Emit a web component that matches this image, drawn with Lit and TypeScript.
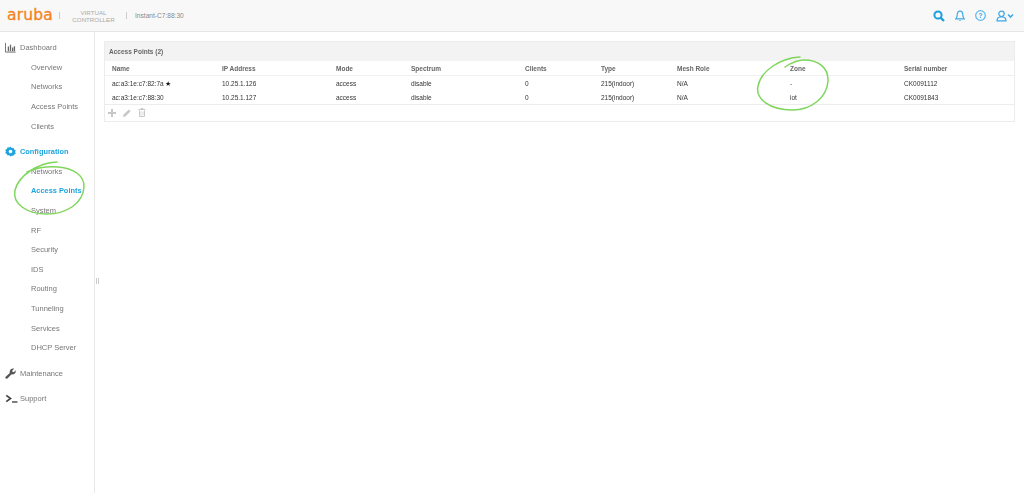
import { LitElement, html, css, svg } from "lit";
import { customElement } from "lit/decorators.js";

const cols = ["Name", "IP Address", "Mode", "Spectrum", "Clients", "Type", "Mesh Role", "Zone", "Serial number"];
const rows = [
  ["ac:a3:1e:c7:82:7a", "10.25.1.126", "access", "disable", "0", "215(indoor)", "N/A", "-", "CK0091112"],
  ["ac:a3:1e:c7:88:30", "10.25.1.127", "access", "disable", "0", "215(indoor)", "N/A", "iot", "CK0091843"],
];

@customElement("app-root")
export class AppRoot extends LitElement {
  static styles = css`
    :host { display: block; width: 1024px; height: 493px; position: relative; overflow: hidden; background: #fff;
      font-family: "Liberation Sans", Arial, sans-serif; font-size: 8px; color: #555; }
    .soft { height: 100%; display: flex; flex-direction: column; filter: blur(0.35px); }
    .top { height: 32px; box-sizing: border-box; flex: none; display: flex; align-items: center; background: #f8f8f8; border-bottom: 1px solid #e6e6e6; padding: 0 10px 0 7px; }
    .logo { font-family: "DejaVu Sans", sans-serif; font-size: 15.5px; line-height: 20px; color: #f58220; width: 47px; flex: none; margin-top: -2px; letter-spacing: 0.2px; -webkit-text-stroke: 0.3px #f58220; }
    .sep { width: 1px; height: 7px; background: #ccc; flex: none; margin-left: 5px; }
    .vc { margin-left: 11px; width: 45px; flex: none; text-align: center; font-size: 6.2px; line-height: 7px; color: #aaa; }
    .sep2 { margin-left: 10px; }
    .inst { margin-left: 8px; font-size: 6.6px; color: #8a8a8a; }
    .icons { margin-left: auto; display: flex; align-items: center; gap: 10px; }
    .icons svg { display: block; }
    .main { flex: 1; display: flex; min-height: 0; }
    .side { width: 95px; box-sizing: border-box; flex: none; border-right: 1px solid #e8e8e8; padding-top: 6px; position: relative; }
    .grip { position: absolute; left: 96px; top: 246px; width: 1px; height: 6px; border-left: 1px solid #ccc; border-right: 1px solid #ccc; }
    .group { height: 19.6px; display: flex; align-items: center; gap: 4px; padding-left: 5px; color: #777; font-size: 7.5px; }
    .group .ic { width: 11px; height: 11px; flex: none; display: block; }
    .group .sup { width: 13px; margin-right: -2px; }
    .group.on { color: #1ea5e0; font-weight: 700; font-size: 7.4px; }
    .item { height: 19.6px; display: flex; align-items: center; padding-left: 31px; color: #777; font-size: 7.5px; white-space: nowrap; }
    .item.on { color: #1ea5e0; font-weight: 700; font-size: 7.4px; }
    .gap1 { margin-top: 6px; }
    .gap2 { margin-top: 6px; }
    .content { flex: 1; padding: 9px 9px 0 9px; }
    .panel { border: 1px solid #ececec; height: 81px; box-sizing: border-box; }
    .ph { height: 19px; background: #f3f3f3; display: flex; align-items: center; padding-left: 4px; font-size: 6.5px; font-weight: 700; color: #666; }
    .grid { display: grid; grid-template-columns: 110px 114px 75px 114px 76px 76px 113px 114px 1fr; padding-left: 7px; }
    .hrow { height: 15px; box-sizing: border-box; align-items: center; border-bottom: 1px solid #f0f0f0; font-weight: 700; color: #666; font-size: 6.5px; }
    .drow { height: 14px; align-items: center; color: #333; font-size: 6.5px; }
    .star { font-size: 7px; color: #111; line-height: 6px; margin-left: 1px; }
    .tools { border-top: 1px solid #ececec; height: 15px; display: flex; align-items: center; gap: 7px; padding-left: 3px; }
    .tools svg { display: block; }
    .marks { position: absolute; left: 0; top: 0; width: 1024px; height: 493px; pointer-events: none; }
  `;

  private gear() {
    return html`<svg class="ic" viewBox="0 0 24 24"><path fill="#1ea5e0" fill-rule="evenodd" d="M12 1l2.500 3.200 4-.6 1.400 3.900 3.600 1.800-1.500 3.700 1.500 3.700-3.600 1.800-1.400 2.900-4-.4L12 23l-2.500-2.900-4 .4-1.400-2.900L.5 15.800 2 12.100.5 8.300l3.600-1.800 1.400-3.900 4 .6zM12 8a4 4 0 100 8 4 4 0 000-8z"/></svg>`;
  }

  render() {
    return html`
      <div class="soft">
        <div class="top">
          <div class="logo">aruba</div>
          <div class="sep"></div>
          <div class="vc">VIRTUAL<br />CONTROLLER</div>
          <div class="sep sep2"></div>
          <div class="inst">Instant-C7:88:30</div>
          <div class="icons">
            <svg width="12" height="12" viewBox="0 0 12 12"><circle cx="5" cy="5" r="3.600" fill="none" stroke="#1e9fdc" stroke-width="2"/><path d="M7.600 7.600L11 11" stroke="#1e9fdc" stroke-width="2.400"/></svg>
            <svg width="10" height="12" viewBox="0 0 10 12"><path d="M5 1.200C3 1.200 2.200 3 2.200 5c0 2-.7 3-1.400 3.800h8.400C8.500 8 7.800 7 7.800 5c0-2-.8-3.800-2.800-3.800z" fill="none" stroke="#3fa9e6" stroke-width="1.200"/><path d="M3.800 10.200a1.300 1.300 0 002.400 0z" fill="#3fa9e6"/></svg>
            <svg width="11" height="11" viewBox="0 0 11 11"><circle cx="5.500" cy="5.500" r="4.800" fill="none" stroke="#5bb6ea" stroke-width="1.200"/><text x="5.500" y="8" font-size="7" font-weight="700" text-anchor="middle" fill="#3fa9e6" font-family="Liberation Sans">?</text></svg>
            <svg width="18" height="12" viewBox="0 0 18 12"><circle cx="5.500" cy="3.800" r="2.700" fill="none" stroke="#3fa9e6" stroke-width="1.200"/><path d="M1 10.800c0-2.400 1.500-3.600 2.800-3.800h3.400c1.300.2 2.800 1.400 2.800 3.800z" fill="none" stroke="#3fa9e6" stroke-width="1.200"/><path d="M12 4.500l2.500 2.500L17 4.500" fill="none" stroke="#3fa9e6" stroke-width="1.600"/></svg>
          </div>
        </div>
        <div class="main">
          <div class="side">
            <div class="group">
              <svg class="ic" viewBox="0 0 12 12"><path d="M.5 1v10h11" fill="none" stroke="#666" stroke-width="1"/><path d="M3 5h1.400v5H3zM5.300 3h1.400v7H5.300zM7.600 6h1.400v4H7.600zM9.600 4.500h1.400V10H9.600z" fill="#666"/></svg>
              <span>Dashboard</span>
            </div>
            <div class="item">Overview</div>
            <div class="item">Networks</div>
            <div class="item">Access Points</div>
            <div class="item">Clients</div>
            <div class="group on gap1">${this.gear()}<span>Configuration</span></div>
            <div class="item">Networks</div>
            <div class="item on">Access Points</div>
            <div class="item">System</div>
            <div class="item">RF</div>
            <div class="item">Security</div>
            <div class="item">IDS</div>
            <div class="item">Routing</div>
            <div class="item">Tunneling</div>
            <div class="item">Services</div>
            <div class="item">DHCP Server</div>
            <div class="group gap2">
              <svg class="ic" viewBox="0 0 12 12"><path d="M.8 11.500L.2 10l5-4.600C4.700 3 6 .5 9 .5l1 .2L7.800 3l.4 1.200 1.300.4L11.700 2.500c.4 3-1.800 5-4.500 4.400l-4.800 4.800z" fill="#555"/></svg>
              <span>Maintenance</span>
            </div>
            <div class="group gap2">
              <svg class="ic sup" viewBox="0 0 13 12"><path d="M.8 2.500L5.500 6 .8 9.500" fill="none" stroke="#444" stroke-width="1.800"/><path d="M7 9.800h6" stroke="#444" stroke-width="1.500"/></svg>
              <span>Support</span>
            </div>
            <div class="grip"></div>
          </div>
          <div class="content">
            <div class="panel">
              <div class="ph">Access Points (2)</div>
              <div class="grid hrow">${cols.map((c) => html`<div>${c}</div>`)}</div>
              ${rows.map(
                (r, i) => html`<div class="grid drow">
                  ${r.map((c, j) => html`<div>${c}${i === 0 && j === 0 ? html`<span class="star">★</span>` : ""}</div>`)}
                </div>`
              )}
              <div class="tools">
                <svg width="8" height="8" viewBox="0 0 8 8"><path d="M3 0h2v3h3v2H5v3H3V5H0V3h3z" fill="#c8c8c8"/></svg>
                <svg width="8" height="8" viewBox="0 0 8 8"><path d="M0 8l.6-2.400L5.800.4l1.800 1.800L2.400 7.400z" fill="#c8c8c8"/></svg>
                <svg width="8" height="9" viewBox="0 0 8 9"><path d="M.5 1.500h7M3 1.500V.5h2v1M1.500 2.500v6h5v-6" fill="none" stroke="#c8c8c8" stroke-width="1"/><path d="M3 3.500v4M5 3.500v4" stroke="#c8c8c8" stroke-width=".7"/></svg>
              </div>
            </div>
          </div>
        </div>
      </div>
      <svg class="marks" viewBox="0 0 1024 493" fill="none" stroke="#7fd65c" stroke-width="1.500" stroke-linecap="round">
        ${svg`<path d="M57 162C38 163 19 175 15 190c-3 14 12 24 32 24 20 0 36-11 37-27 .5-11-10-19-26-20-12-1-22 1-31 5"/>
        <path d="M800 57C780 58 761 71 758 86c-3 13 12 24 34 24 20 0 35-13 36-29 .5-13-9-21-24-21-7 0-13 3-19 7"/>`}
      </svg>
    `;
  }
}
